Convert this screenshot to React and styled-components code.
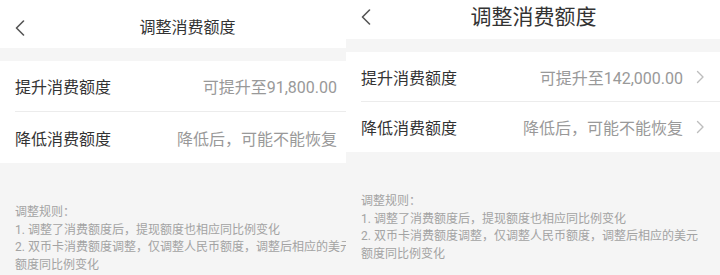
import React from "react";
import styled, { createGlobalStyle } from "styled-components";

const Global = createGlobalStyle`
  html, body { margin: 0; padding: 0; background: #ffffff; }
  body { font-family: Roboto, "Noto Sans CJK SC", sans-serif; }
  * { box-sizing: border-box; }
`;

const Stage = styled.div`
  display: flex;
  width: 720px;
  height: 275px;
  overflow: hidden;
`;

const Crop = styled.div`
  width: ${(p) => p.$w}px;
  height: 275px;
  overflow: hidden;
  flex: none;
`;

const Phone = styled.div`
  width: 375px;
  height: 275px;
  background: #f5f5f5;
  display: flex;
  flex-direction: column;
`;

const Header = styled.div`
  height: ${(p) => p.$h}px;
  padding: ${(p) => p.$pt}px 15px ${(p) => p.$pb}px;
  background: #ffffff;
  display: grid;
  grid-template-columns: 40px 1fr 40px;
  align-items: center;
  flex: none;
`;

const Back = styled.div`
  display: flex;
  align-items: center;
  color: #555;
`;

const Title = styled.div`
  text-align: center;
  font-size: ${(p) => p.$fs}px;
  color: #333;
  line-height: 1;
`;

const Band = styled.div`
  height: 13px;
  background: #f5f5f5;
  flex: none;
`;

const List = styled.div`
  background: #ffffff;
  flex: none;
`;

const Row = styled.div`
  height: ${(p) => p.$h}px;
  margin-left: 15px;
  padding-right: 16px;
  display: flex;
  align-items: center;
  border-bottom: ${(p) => (p.$divider ? "1px solid #ececec" : "none")};
`;

const Label = styled.div`
  font-size: 16px;
  color: #333;
  flex: 1;
`;

const Value = styled.div`
  font-size: 16px;
  color: #999;
`;

const Arrow = styled.div`
  margin-left: 13px;
  display: flex;
  align-items: center;
`;

const Rules = styled.div`
  padding: 41px 15px 0;
  font-size: 12px;
  line-height: 17.7px;
  color: #a3a3a3;
`;

const Line = styled.div``;

const BackIcon = () => (
  <svg width="10" height="16" viewBox="0 0 10 16">
    <polyline points="8.5,1 1.5,8 8.5,15" fill="none" stroke="#555" strokeWidth="1.6" strokeLinecap="round" strokeLinejoin="round" />
  </svg>
);

const ChevronIcon = () => (
  <svg width="9" height="14" viewBox="0 0 9 14">
    <polyline points="1.5,1.5 7,7 1.5,12.5" fill="none" stroke="#bdbdbd" strokeWidth="1.4" strokeLinecap="round" strokeLinejoin="round" />
  </svg>
);

const Screen = ({ w, header, rowH, amount }) => (
  <Crop $w={w}>
    <Phone>
      <Header $h={header.h} $pt={header.pt} $pb={header.pb}>
        <Back>
          <BackIcon />
        </Back>
        <Title $fs={header.fs}>调整消费额度</Title>
        <div />
      </Header>
      <Band />
      <List>
        <Row $h={rowH} $divider>
          <Label>提升消费额度</Label>
          <Value>可提升至{amount}</Value>
          <Arrow>
            <ChevronIcon />
          </Arrow>
        </Row>
        <Row $h={rowH}>
          <Label>降低消费额度</Label>
          <Value>降低后，可能不能恢复</Value>
          <Arrow>
            <ChevronIcon />
          </Arrow>
        </Row>
      </List>
      <Rules>
        <Line>调整规则：</Line>
        <Line>1. 调整了消费额度后，提现额度也相应同比例变化</Line>
        <Line>2. 双币卡消费额度调整，仅调整人民币额度，调整后相应的美元额度同比例变化</Line>
      </Rules>
    </Phone>
  </Crop>
);

export default function App() {
  return (
    <>
      <Global />
      <Stage>
        <Screen w={346} header={{ h: 48, pt: 8, pb: 0, fs: 16 }} rowH={51} amount="91,800.00" />
        <Screen w={374} header={{ h: 39, pt: 0, pb: 5, fs: 21 }} rowH={50} amount="142,000.00" />
      </Stage>
    </>
  );
}
